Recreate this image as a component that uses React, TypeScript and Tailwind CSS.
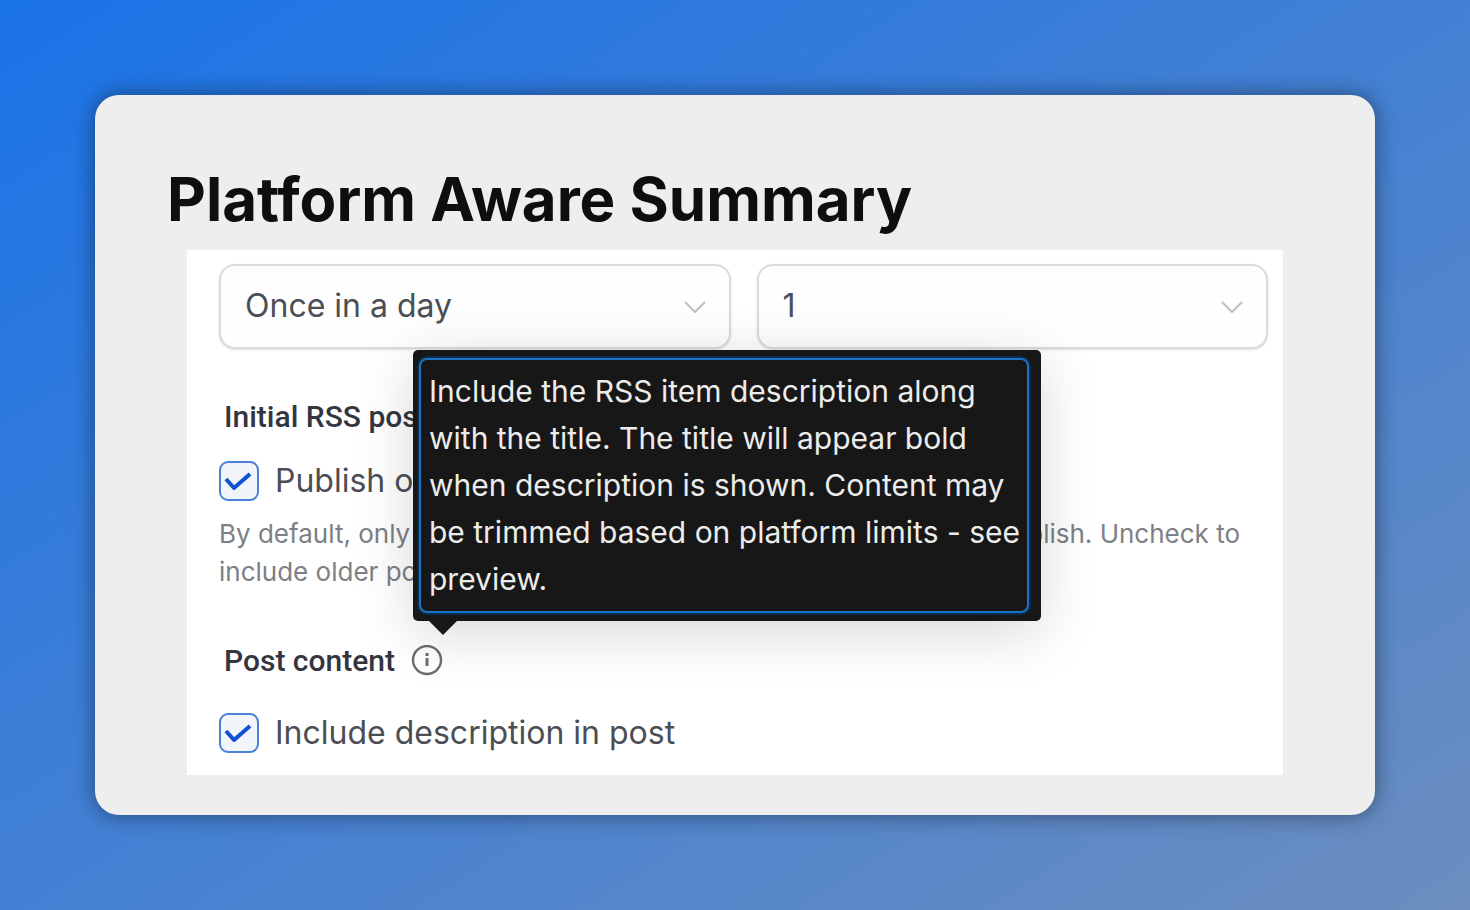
import type { ReactNode } from "react";

type SelectFieldProps = {
  id: string;
  label: string;
  options: string[];
};

const SelectField = ({ id, label, options }: SelectFieldProps) => {
  return (
    <div className="relative flex-1">
      <select
        id={id}
        aria-label={label}
        className="block h-[85px] w-full appearance-none rounded-2xl border-2 border-[#d9dbdc] bg-[#fefefe] pr-16 pb-0.5 pl-6 text-[32px] text-[#4b4e54] shadow-sm outline-none"
      >
        {options.map((option) => (
          <option key={option}>{option}</option>
        ))}
      </select>
      <svg
        className="pointer-events-none absolute top-[37px] right-6 h-3 w-6"
        viewBox="0 0 24 12"
        fill="none"
        stroke="#bdbfc1"
        strokeWidth="2"
        aria-hidden="true"
      >
        <path d="M2 1l10 10L22 1" />
      </svg>
    </div>
  );
};

type CheckFieldProps = {
  id: string;
  children: ReactNode;
};

const CheckField = ({ id, children }: CheckFieldProps) => {
  return (
    <div className="flex items-center gap-4">
      <div className="relative h-10 w-10">
        <input
          id={id}
          type="checkbox"
          defaultChecked
          className="peer block h-10 w-10 appearance-none rounded-[9px] border-2 border-[#4a80dc] bg-[#f1f4f9]"
        />
        <svg
          className="pointer-events-none absolute inset-0 hidden h-10 w-10 peer-checked:block"
          viewBox="0 0 40 40"
          fill="none"
          stroke="#1152d3"
          strokeWidth="4"
          strokeLinejoin="round"
          aria-hidden="true"
        >
          <path d="M7 18l8 9L31 13" />
        </svg>
      </div>
      <label htmlFor={id} className="text-[32px] leading-10 text-[#4b4e54]">{children}</label>
    </div>
  );
};

const Tooltip = ({ children }: { children: ReactNode }) => {
  return (
    <div
      role="tooltip"
      id="description-hint"
      className="absolute bottom-full left-0.5 mb-6 w-[628px] rounded-[5px] bg-[#171717] py-2 pr-3 pl-1.5 shadow-[0_12px_60px_rgba(0,0,0,0.16)]"
    >
      <p className="rounded-lg border-2 border-[#1e74c4] py-2 pr-1 pl-2 text-[30px] leading-[47px] text-[#ececec] ring-2 ring-[#0b2c4d]">
        {children}
      </p>
      <svg className="absolute top-full left-4 h-[14px] w-7" viewBox="0 0 28 14" fill="#171717" aria-hidden="true">
        <path d="M0 0h28L14 14z" />
      </svg>
    </div>
  );
};

const App = () => {
  return (
    <main className="min-h-screen bg-linear-to-br/srgb from-[#1a73e8] to-[#6c8ebf] p-[95px] font-['Inter',sans-serif]">
      <section className="rounded-3xl bg-[#eeeeee] px-[92px] pt-[68px] pb-10 shadow-[0_0_22px_rgba(0,0,0,0.45)]">
        <h1 className="-ml-5 pb-[15px] text-[60px] leading-[72px] font-bold text-[#0e0e0e]">
          Platform Aware Summary
        </h1>
        <form className="bg-white pt-[14px] pr-[15px] pb-[22px] pl-8">
          <div className="flex gap-[26px]">
            <SelectField id="frequency" label="Posting frequency" options={["Once in a day", "Twice in a day"]} />
            <SelectField id="count" label="Posts each time" options={["1", "2", "3"]} />
          </div>

          <h2 className="mt-12 ml-[5px] font-['Roboto',sans-serif] text-[30px] leading-10 font-medium text-[#33363f]">
            Initial RSS posts
          </h2>
          <div className="mt-6">
            <CheckField id="only-new">Publish only new</CheckField>
          </div>
          <p className="mt-[14px] text-[26px] leading-[38px] text-[#7c7f86]">
            <span className="flex justify-between pr-7">
              <span>By default, only</span>
              <span>new items added after setup will publish. Uncheck to</span>
            </span>
            include older posts.
          </p>

          <div className="mt-[50px] ml-[5px] flex items-center gap-4">
            <h2 className="font-['Roboto',sans-serif] text-[30px] leading-10 font-medium text-[#33363f]">
              Post content
            </h2>
            <div className="relative">
              <button
                type="button"
                aria-label="About post content"
                aria-describedby="description-hint"
                className="block h-8 w-8"
              >
                <svg className="h-8 w-8" viewBox="0 0 32 32" fill="none" stroke="#6b6d72" aria-hidden="true">
                  <circle cx="16" cy="15" r="14" strokeWidth="2.4" />
                  <path d="M16 13v8" strokeWidth="3" />
                  <path d="M16 8v3" strokeWidth="3" />
                </svg>
              </button>
              <Tooltip>
                Include the RSS item description along with the title. The title will appear bold when description is
                shown. Content may be trimmed based on platform limits - see preview.
              </Tooltip>
            </div>
          </div>
          <div className="mt-8">
            <CheckField id="include-description">Include description in post</CheckField>
          </div>
        </form>
      </section>
    </main>
  );
};

export default App;
